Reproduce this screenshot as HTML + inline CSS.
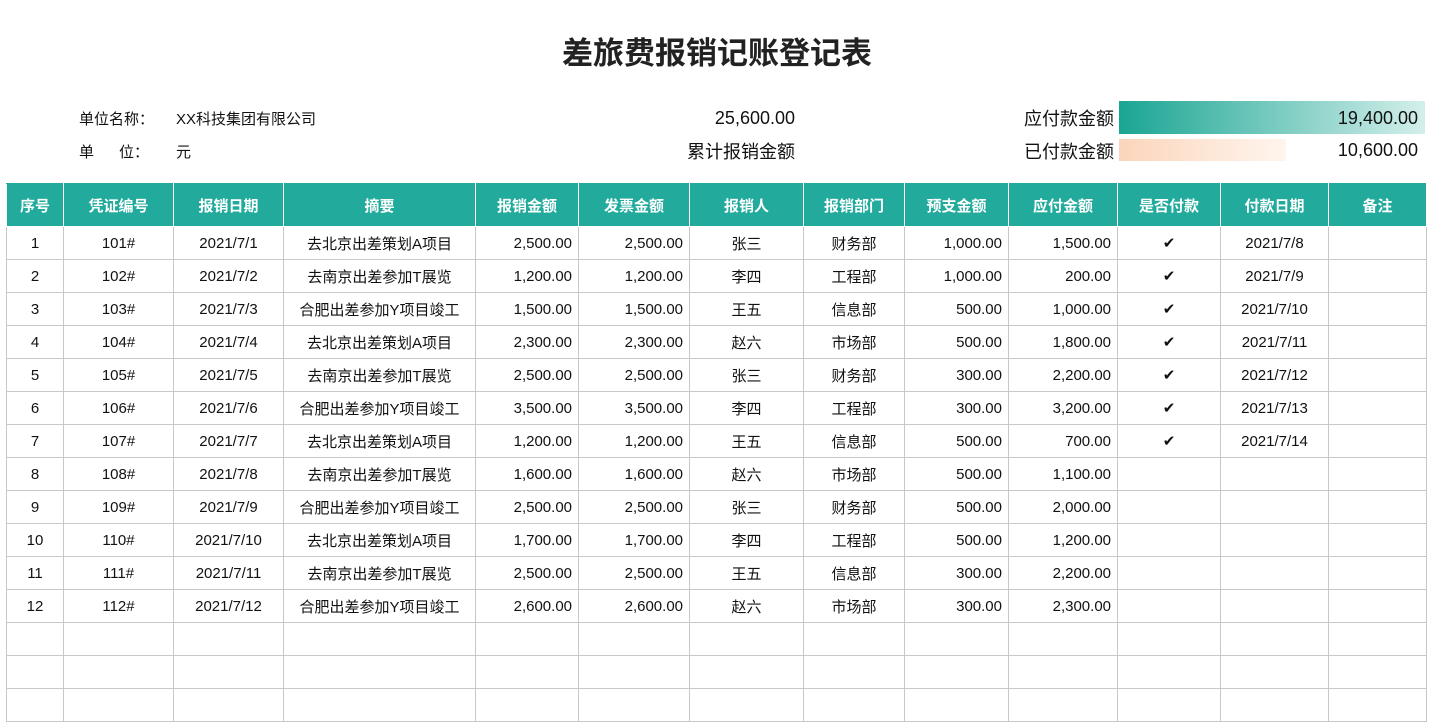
<!DOCTYPE html>
<html><head><meta charset="utf-8"><style>
body{margin:0;width:1442px;height:715px;overflow:hidden;background:#fff;font-family:"Liberation Sans","Noto Sans CJK SC",sans-serif;color:#111;position:relative}
.a{position:absolute;white-space:nowrap}
h1{position:absolute;left:0;width:1434px;top:28px;margin:0;text-align:center;font-size:31px;font-weight:bold;color:#222}
table{position:absolute;left:6px;top:183px;border-collapse:collapse;table-layout:fixed;font-size:15px}
td,th{border:1px solid #c8c8c8;height:32px;padding:0 6px;text-align:center;white-space:nowrap;overflow:hidden}
th{background:#22ab9c;color:#fff;height:42px;border-color:#fff;border-top-color:#22ab9c;font-size:15px}
td.r{text-align:right}
</style></head><body>
<h1>差旅费报销记账登记表</h1>
<div class="a" style="left:79px;top:108px;font-size:15px">单位名称：</div>
<div class="a" style="left:176px;top:108px;font-size:15px">XX科技集团有限公司</div>
<div class="a" style="left:79px;top:141px;font-size:15px">单&nbsp;&nbsp;&nbsp;&nbsp;&nbsp;&nbsp;位：</div>
<div class="a" style="left:176px;top:141px;font-size:15px">元</div>
<div class="a" style="left:660px;width:135px;text-align:right;top:108px;font-size:18px">25,600.00</div>
<div class="a" style="left:660px;width:135px;text-align:right;top:138px;font-size:18px">累计报销金额</div>
<div class="a" style="left:990px;width:124px;text-align:right;top:105px;font-size:18px">应付款金额</div>
<div class="a" style="left:990px;width:124px;text-align:right;top:138px;font-size:18px">已付款金额</div>
<div class="a" style="left:1119px;top:101px;width:306px;height:33px;background:linear-gradient(90deg,#1aa593,#d4efeb)"></div>
<div class="a" style="left:1119px;top:139px;width:167px;height:22px;background:linear-gradient(90deg,#fbd5bb,#fff5ee)"></div>
<div class="a" style="left:1200px;width:218px;text-align:right;top:108px;font-size:18px">19,400.00</div>
<div class="a" style="left:1200px;width:218px;text-align:right;top:140px;font-size:18px">10,600.00</div>
<table>
<colgroup><col style="width:57px"><col style="width:110px"><col style="width:110px"><col style="width:192px"><col style="width:103px"><col style="width:111px"><col style="width:114px"><col style="width:101px"><col style="width:104px"><col style="width:109px"><col style="width:103px"><col style="width:108px"><col style="width:98px"></colgroup>
<tr><th>序号</th><th>凭证编号</th><th>报销日期</th><th>摘要</th><th>报销金额</th><th>发票金额</th><th>报销人</th><th>报销部门</th><th>预支金额</th><th>应付金额</th><th>是否付款</th><th>付款日期</th><th>备注</th></tr>
<tr><td>1</td><td>101#</td><td>2021/7/1</td><td>去北京出差策划A项目</td><td class="r">2,500.00</td><td class="r">2,500.00</td><td>张三</td><td>财务部</td><td class="r">1,000.00</td><td class="r">1,500.00</td><td>✔</td><td>2021/7/8</td><td></td></tr>
<tr><td>2</td><td>102#</td><td>2021/7/2</td><td>去南京出差参加T展览</td><td class="r">1,200.00</td><td class="r">1,200.00</td><td>李四</td><td>工程部</td><td class="r">1,000.00</td><td class="r">200.00</td><td>✔</td><td>2021/7/9</td><td></td></tr>
<tr><td>3</td><td>103#</td><td>2021/7/3</td><td>合肥出差参加Y项目竣工</td><td class="r">1,500.00</td><td class="r">1,500.00</td><td>王五</td><td>信息部</td><td class="r">500.00</td><td class="r">1,000.00</td><td>✔</td><td>2021/7/10</td><td></td></tr>
<tr><td>4</td><td>104#</td><td>2021/7/4</td><td>去北京出差策划A项目</td><td class="r">2,300.00</td><td class="r">2,300.00</td><td>赵六</td><td>市场部</td><td class="r">500.00</td><td class="r">1,800.00</td><td>✔</td><td>2021/7/11</td><td></td></tr>
<tr><td>5</td><td>105#</td><td>2021/7/5</td><td>去南京出差参加T展览</td><td class="r">2,500.00</td><td class="r">2,500.00</td><td>张三</td><td>财务部</td><td class="r">300.00</td><td class="r">2,200.00</td><td>✔</td><td>2021/7/12</td><td></td></tr>
<tr><td>6</td><td>106#</td><td>2021/7/6</td><td>合肥出差参加Y项目竣工</td><td class="r">3,500.00</td><td class="r">3,500.00</td><td>李四</td><td>工程部</td><td class="r">300.00</td><td class="r">3,200.00</td><td>✔</td><td>2021/7/13</td><td></td></tr>
<tr><td>7</td><td>107#</td><td>2021/7/7</td><td>去北京出差策划A项目</td><td class="r">1,200.00</td><td class="r">1,200.00</td><td>王五</td><td>信息部</td><td class="r">500.00</td><td class="r">700.00</td><td>✔</td><td>2021/7/14</td><td></td></tr>
<tr><td>8</td><td>108#</td><td>2021/7/8</td><td>去南京出差参加T展览</td><td class="r">1,600.00</td><td class="r">1,600.00</td><td>赵六</td><td>市场部</td><td class="r">500.00</td><td class="r">1,100.00</td><td></td><td></td><td></td></tr>
<tr><td>9</td><td>109#</td><td>2021/7/9</td><td>合肥出差参加Y项目竣工</td><td class="r">2,500.00</td><td class="r">2,500.00</td><td>张三</td><td>财务部</td><td class="r">500.00</td><td class="r">2,000.00</td><td></td><td></td><td></td></tr>
<tr><td>10</td><td>110#</td><td>2021/7/10</td><td>去北京出差策划A项目</td><td class="r">1,700.00</td><td class="r">1,700.00</td><td>李四</td><td>工程部</td><td class="r">500.00</td><td class="r">1,200.00</td><td></td><td></td><td></td></tr>
<tr><td>11</td><td>111#</td><td>2021/7/11</td><td>去南京出差参加T展览</td><td class="r">2,500.00</td><td class="r">2,500.00</td><td>王五</td><td>信息部</td><td class="r">300.00</td><td class="r">2,200.00</td><td></td><td></td><td></td></tr>
<tr><td>12</td><td>112#</td><td>2021/7/12</td><td>合肥出差参加Y项目竣工</td><td class="r">2,600.00</td><td class="r">2,600.00</td><td>赵六</td><td>市场部</td><td class="r">300.00</td><td class="r">2,300.00</td><td></td><td></td><td></td></tr>
<tr><td></td><td></td><td></td><td></td><td></td><td></td><td></td><td></td><td></td><td></td><td></td><td></td><td></td></tr>
<tr><td></td><td></td><td></td><td></td><td></td><td></td><td></td><td></td><td></td><td></td><td></td><td></td><td></td></tr>
<tr><td></td><td></td><td></td><td></td><td></td><td></td><td></td><td></td><td></td><td></td><td></td><td></td><td></td></tr>
</table>
</body></html>
